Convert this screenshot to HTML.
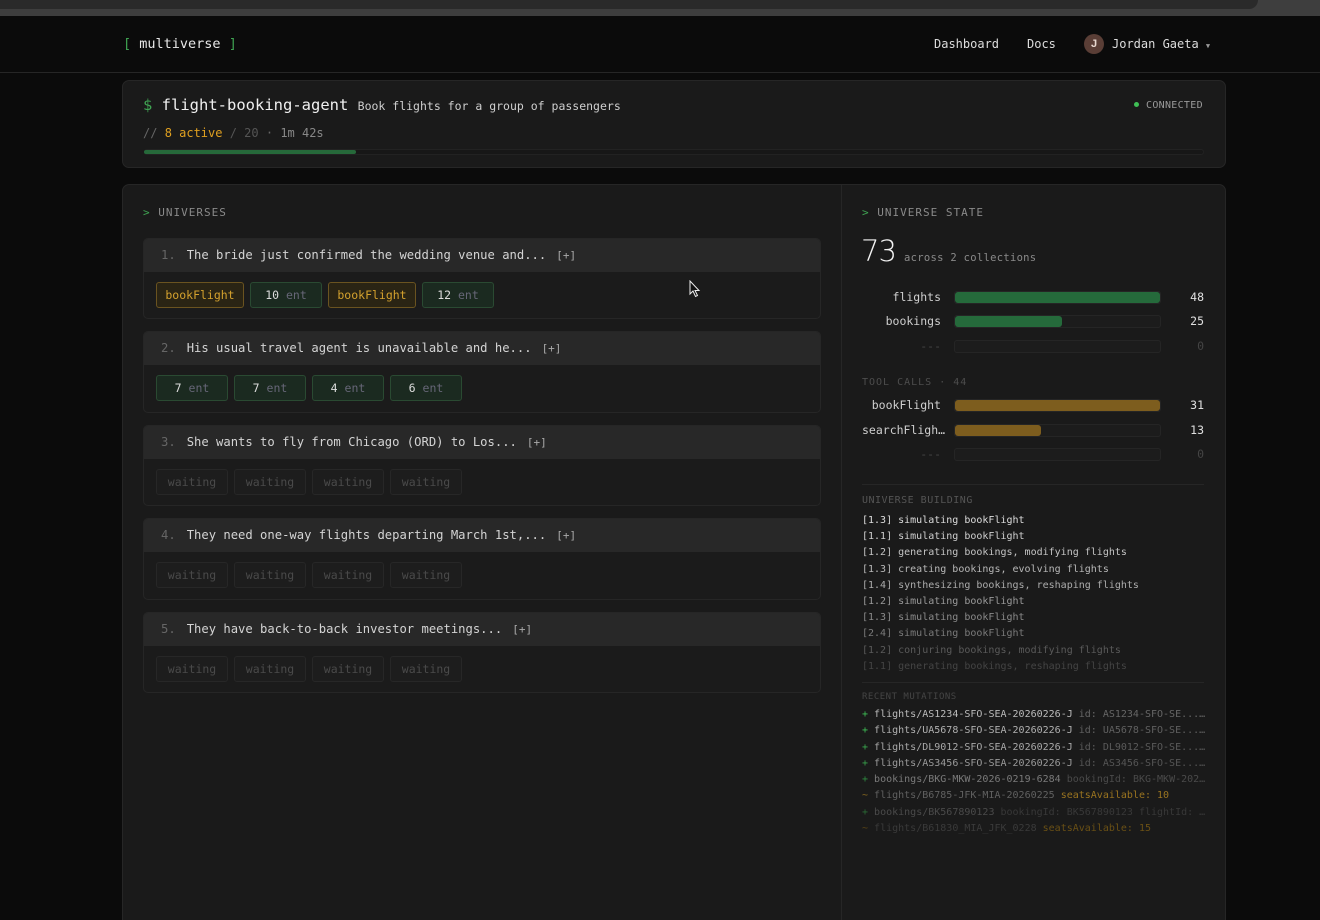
<!DOCTYPE html>
<html style="overflow:hidden"><head><meta charset="utf-8"><style>
*{box-sizing:border-box;margin:0;padding:0}
html,body{width:1320px;height:920px;overflow:hidden}
body{background:#0b0b0b;font-family:"DejaVu Sans Mono","Liberation Mono",monospace;color:#d8d8d8;font-size:12px;position:relative}
.abs{position:absolute}
.chrome2{left:0;top:0;width:1320px;height:16px;background:#3e3e3e}
.chrome3{left:0;top:0;width:1258px;height:9px;background:#2a2a2a;border-radius:0 0 10px 0}
.hdr{left:0;top:72px;width:1320px;height:1px;background:#262626}
.card{background:#1a1a1a;border:1px solid #262626;border-radius:7px}
.g{color:#3fa352}
.u{left:143px;width:678px;border:1px solid #262626;border-radius:5px;background:#1b1b1b;overflow:hidden}
.uh{height:33px;background:#282828;padding:0 0 0 17px;line-height:33px;white-space:nowrap;color:#d4d4d4;font-size:12.2px}
.uh .n{color:#666;margin-right:11px}
.uh .p{color:#aaa;font-size:11px;margin-left:10px}
.chips{padding:10px 12px;display:flex;gap:6px}
.chip{height:26px;line-height:24px;border-radius:3px;text-align:center;font-size:11.5px}
.cb{width:88px;background:#2a2414;border:1px solid #6a5320;color:#d4a12e}
.ce{width:72px;background:#1b2a20;border:1px solid #2a4a32;color:#ddd}
.ce span{color:#667}
.cw{width:72px;background:#1d1d1d;border:1px solid #272727;color:#4a4a4a}
.lbl{font-size:11px;color:#8a8a8a;letter-spacing:1px}
.row{left:862px;width:342px;height:14px}
.row .l{position:absolute;right:263px;top:0;font-size:11.5px;color:#cfcfcf;text-align:right;white-space:nowrap}
.row .b{position:absolute;left:92px;top:1px;width:207px;height:13px;border:1px solid #252525;background:#1c1c1c;border-radius:3px;overflow:hidden}
.row .f{height:100%;border-radius:3px}
.row .c{position:absolute;right:0;top:0;font-size:11.5px;color:#e0e0e0}
.log{left:862px;font-size:10px;line-height:16.2px;white-space:nowrap}
.mut{left:862px;width:344px;font-size:10px;line-height:16.3px;white-space:nowrap;overflow:hidden}
.mut div{overflow:hidden;text-overflow:ellipsis}
</style></head><body>
<div class="abs chrome2"></div><div class="abs chrome3"></div>
<div class="abs hdr"></div>
<div class="abs" style="left:123px;top:36px;font-size:13.5px;color:#e8e8e8"><span class="g">[</span> multiverse <span class="g">]</span></div>
<div class="abs" style="left:934px;top:37px;font-size:12px;color:#ddd">Dashboard</div>
<div class="abs" style="left:1027px;top:37px;font-size:12px;color:#ddd">Docs</div>
<div class="abs" style="left:1084px;top:34px;width:20px;height:20px;border-radius:50%;background:#5a3e36;color:#e8d8d0;font-size:11px;text-align:center;line-height:20px;font-family:'Liberation Sans',sans-serif;font-weight:bold">J</div>
<div class="abs" style="left:1112px;top:37px;font-size:12px;color:#ddd">Jordan Gaeta <span style="font-size:7px;color:#999">▼</span></div>

<div class="abs card" style="left:122px;top:80px;width:1104px;height:88px"></div>
<div class="abs" style="left:143px;top:96px;font-size:15.5px;color:#f0f0f0;white-space:nowrap"><span class="g">$</span> flight-booking-agent <span style="font-size:11.5px;color:#cfcfcf">Book flights for a group of passengers</span></div>
<div class="abs" style="left:1134px;top:102px;width:5px;height:5px;border-radius:50%;background:#3fbf55"></div>
<div class="abs" style="left:1146px;top:100px;font-size:10px;color:#999;letter-spacing:.3px">CONNECTED</div>
<div class="abs" style="left:143px;top:126px;font-size:12px;color:#666">// <span style="color:#e0a020">8 active</span> <span style="color:#555">/ 20</span> · <span style="color:#888">1m 42s</span></div>
<div class="abs" style="left:144px;top:149px;width:1060px;height:6px;border:1px solid #222;border-radius:3px;background:#171717"></div>
<div class="abs" style="left:144px;top:150px;width:212px;height:4px;border-radius:2px;background:#26693a"></div>

<div class="abs card" style="left:122px;top:184px;width:1104px;height:745px"></div>
<div class="abs" style="left:841px;top:185px;width:1px;height:735px;background:#262626"></div>

<div class="abs lbl" style="left:143px;top:206px"><span class="g">&gt;</span> UNIVERSES</div>

<div class="abs u" style="top:238px;height:81px"><div class="uh"><span class="n">1.</span>The bride just confirmed the wedding venue and...<span class="p">[+]</span></div>
<div class="chips"><div class="chip cb">bookFlight</div><div class="chip ce">10 <span>ent</span></div><div class="chip cb">bookFlight</div><div class="chip ce">12 <span>ent</span></div></div></div>

<div class="abs u" style="top:331px;height:82px"><div class="uh"><span class="n">2.</span>His usual travel agent is unavailable and he...<span class="p">[+]</span></div>
<div class="chips"><div class="chip ce">7 <span>ent</span></div><div class="chip ce">7 <span>ent</span></div><div class="chip ce">4 <span>ent</span></div><div class="chip ce">6 <span>ent</span></div></div></div>

<div class="abs u" style="top:425px;height:81px"><div class="uh"><span class="n">3.</span>She wants to fly from Chicago (ORD) to Los...<span class="p">[+]</span></div>
<div class="chips"><div class="chip cw">waiting</div><div class="chip cw">waiting</div><div class="chip cw">waiting</div><div class="chip cw">waiting</div></div></div>

<div class="abs u" style="top:518px;height:82px"><div class="uh"><span class="n">4.</span>They need one-way flights departing March 1st,...<span class="p">[+]</span></div>
<div class="chips"><div class="chip cw">waiting</div><div class="chip cw">waiting</div><div class="chip cw">waiting</div><div class="chip cw">waiting</div></div></div>

<div class="abs u" style="top:612px;height:81px"><div class="uh"><span class="n">5.</span>They have back-to-back investor meetings...<span class="p">[+]</span></div>
<div class="chips"><div class="chip cw">waiting</div><div class="chip cw">waiting</div><div class="chip cw">waiting</div><div class="chip cw">waiting</div></div></div>

<div class="abs lbl" style="left:862px;top:206px"><span class="g">&gt;</span> UNIVERSE STATE</div>
<div class="abs" style="left:861px;top:234px;font-size:29px;color:#f2f2f2;font-family:'DejaVu Sans',sans-serif;font-weight:300;letter-spacing:-1px">73</div>
<div class="abs" style="left:904px;top:252px;font-size:10.5px;color:#8a8a8a;letter-spacing:.3px">across 2 collections</div>

<div class="abs row" style="top:290px"><div class="l">flights</div><div class="b"><div class="f" style="width:100%;background:#256a3b"></div></div><div class="c">48</div></div>
<div class="abs row" style="top:314px"><div class="l">bookings</div><div class="b"><div class="f" style="width:52%;background:#256a3b"></div></div><div class="c">25</div></div>
<div class="abs row" style="top:339px"><div class="l" style="color:#444">---</div><div class="b"></div><div class="c" style="color:#444">0</div></div>

<div class="abs lbl" style="left:862px;top:377px;font-size:10px;color:#4d4d4d">TOOL CALLS · 44</div>
<div class="abs row" style="top:398px"><div class="l">bookFlight</div><div class="b"><div class="f" style="width:100%;background:#7d5d1e"></div></div><div class="c">31</div></div>
<div class="abs row" style="top:423px"><div class="l" style="right:auto;left:0;text-align:left">searchFligh…</div><div class="b"><div class="f" style="width:42%;background:#7d5d1e"></div></div><div class="c">13</div></div>
<div class="abs row" style="top:447px"><div class="l" style="color:#444">---</div><div class="b"></div><div class="c" style="color:#444">0</div></div>

<div class="abs" style="left:862px;top:484px;width:342px;height:1px;background:#262626"></div>
<div class="abs lbl" style="left:862px;top:495px;font-size:10px;color:#555;letter-spacing:.5px">UNIVERSE BUILDING</div>
<div class="abs log" style="top:513px">
<div style="color:#ddd">[1.3] simulating bookFlight</div>
<div style="color:#d0d0d0">[1.1] simulating bookFlight</div>
<div style="color:#c4c4c4">[1.2] generating bookings, modifying flights</div>
<div style="color:#b8b8b8">[1.3] creating bookings, evolving flights</div>
<div style="color:#acacac">[1.4] synthesizing bookings, reshaping flights</div>
<div style="color:#9a9a9a">[1.2] simulating bookFlight</div>
<div style="color:#8a8a8a">[1.3] simulating bookFlight</div>
<div style="color:#7a7a7a">[2.4] simulating bookFlight</div>
<div style="color:#5a5a5a">[1.2] conjuring bookings, modifying flights</div>
<div style="color:#444">[1.1] generating bookings, reshaping flights</div>
</div>
<div class="abs" style="left:862px;top:682px;width:342px;height:1px;background:#262626"></div>
<div class="abs lbl" style="left:862px;top:692px;font-size:9px;color:#454545;letter-spacing:.5px">RECENT MUTATIONS</div>
<div class="abs mut" style="top:707px">
<div style="color:#bbb"><span style="color:#3fbf55">+</span> flights/AS1234-SFO-SEA-20260226-J <span style="color:#666">id: AS1234-SFO-SE...…</span></div>
<div style="color:#b0b0b0"><span style="color:#3fbf55">+</span> flights/UA5678-SFO-SEA-20260226-J <span style="color:#606060">id: UA5678-SFO-SE...…</span></div>
<div style="color:#a8a8a8"><span style="color:#3aa84e">+</span> flights/DL9012-SFO-SEA-20260226-J <span style="color:#5a5a5a">id: DL9012-SFO-SE...…</span></div>
<div style="color:#9a9a9a"><span style="color:#38a04b">+</span> flights/AS3456-SFO-SEA-20260226-J <span style="color:#555">id: AS3456-SFO-SE...…</span></div>
<div style="color:#7a7a7a"><span style="color:#2f8a40">+</span> bookings/BKG-MKW-2026-0219-6284 <span style="color:#4a4a4a">bookingId: BKG-MKW-202…</span></div>
<div style="color:#606060"><span style="color:#8a6a20">~</span> flights/B6785-JFK-MIA-20260225 <span style="color:#9a7420">seatsAvailable: 10</span></div>
<div style="color:#4a4a4a"><span style="color:#2a6a35">+</span> bookings/BK567890123 <span style="color:#383838">bookingId: BK567890123 flightId: …</span></div>
<div style="color:#3a3a3a"><span style="color:#5a4515">~</span> flights/B61830_MIA_JFK_0228 <span style="color:#6a5015">seatsAvailable: 15</span></div>
</div>
<svg class="abs" style="left:689px;top:280px" width="12" height="18" viewBox="0 0 12 18"><path d="M1 1 L1 14 L4 11 L6.5 16.5 L8.5 15.5 L6 10.5 L10 10.5 Z" fill="#111" stroke="#eee" stroke-width="1"/></svg>
</body></html>
